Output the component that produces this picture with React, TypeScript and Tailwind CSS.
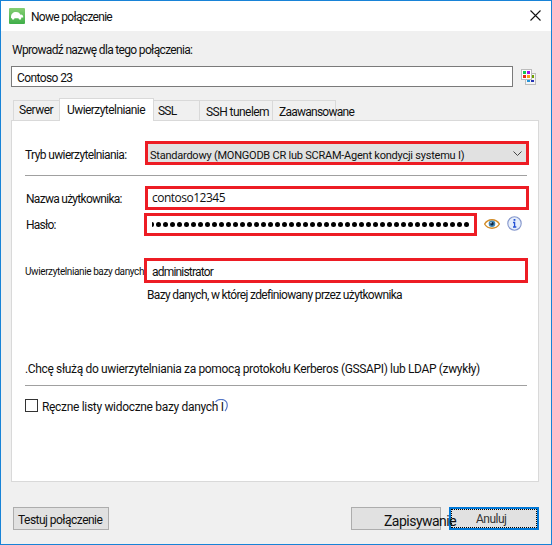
import React from "react";

function TurtleIcon() {
  return (
    <svg width="16" height="16" viewBox="0 0 16 16">
      <defs>
        <linearGradient id="turtle" x1="0" y1="0" x2="0" y2="1">
          <stop offset="0" stopColor="#86cf74" />
          <stop offset="1" stopColor="#3fae49" />
        </linearGradient>
      </defs>
      <rect width="16" height="16" rx="1" fill="url(#turtle)" />
      <path d="M2 9C2 6 4 4 7 4S10.5 5 11.2 6.8C12 6 14 6.8 14.2 8.5V9.6H12.3L12 11.5H10L9.5 10.2H5.5L5 11.5H3.2L3 10.2H2Z" fill="#fff" />
    </svg>
  );
}

function PaletteIcon() {
  return (
    <svg width="16" height="16" viewBox="0 0 16 16" shapeRendering="crispEdges">
      <rect x="4.5" y="4.5" width="10" height="11" fill="#f5f5f5" stroke="#bcbcbc" />
      <rect x="11" y="6" width="2" height="3" fill="#70a000" />
      <rect x="6" y="11" width="3" height="2" fill="#2794d8" />
      <rect x="10" y="11" width="3" height="2" fill="#2433b5" />
      <rect x=".5" y=".5" width="10" height="10" fill="#fff" stroke="#bcbcbc" />
      <rect x="2" y="2" width="3" height="3" fill="#16c653" />
      <rect x="6" y="2" width="3" height="3" fill="#a40ee8" />
      <rect x="2" y="6" width="3" height="3" fill="#e62b16" />
      <rect x="6" y="6" width="3" height="3" fill="#ff9e13" />
    </svg>
  );
}

function EyeIcon() {
  return (
    <svg width="16" height="12" viewBox="0 0 16 12">
      <path d="M.6 6C4 .4 12 .4 15.4 6C12 11.6 4 11.6 .6 6Z" fill="#fff" stroke="#d28b25" strokeWidth="1.4" />
      <circle cx="8" cy="5.8" r="3.3" fill="#3f86b5" />
      <circle cx="8" cy="5.8" r="1.7" fill="#10243c" />
      <circle cx="7" cy="4.7" r=".8" fill="#d8effc" />
    </svg>
  );
}

function InfoIcon() {
  return (
    <svg width="15" height="15" viewBox="0 0 15 15">
      <circle cx="7.5" cy="7.5" r="6.7" fill="#e7effc" stroke="#8597cc" strokeWidth="1.1" />
      <path d="M6 6.5H7.6V11M6 11H9.3" fill="none" stroke="#2452d6" strokeWidth="1.3" />
      <rect x="6.6" y="3" width="1.8" height="1.8" fill="#2452d6" />
    </svg>
  );
}

const dots = Array.from({ length: 45 }, (_, i) => i);

export default function App() {
  return (
    <div className="flex h-[545px] w-[552px] flex-col overflow-hidden border border-[#1883d7] bg-[#f0f0f0] font-['Roboto','Open_Sans',sans-serif] text-[12px] leading-[16px] whitespace-nowrap text-[#101010]">
      <header className="flex h-[30px] shrink-0 bg-white pt-[7px] pl-2">
        <TurtleIcon />
        <span className="ml-[6px] pt-px tracking-[-0.7px]">Nowe połączenie</span>
        <svg className="mt-[2px] mr-[10px] ml-auto" width="11" height="11" viewBox="0 0 11 11">
          <path d="M.5 .5L10.5 10.5M10.5 .5L.5 10.5" stroke="#111" strokeWidth="1.1" />
        </svg>
      </header>

      <div className="h-[35px] shrink-0 pt-[11px] pl-[11px] tracking-[-0.67px]">Wprowadź nazwę dla tego połączenia:</div>
      <div className="flex h-[21px] shrink-0 pl-[10px]">
        <div className="h-[21px] w-[502px] border border-[#7a7a7a] bg-white pt-[3px] pl-[5px] tracking-[-0.6px]">Contoso 23</div>
        <div className="ml-2 pt-[3px]"><PaletteIcon /></div>
      </div>

      <nav className="z-10 mt-[10px] ml-3 flex h-[24px] shrink-0 items-end">
        <div className="mb-px h-[20px] w-[46px] border-t border-l border-[#d9d9d9] pt-px pl-[5px] tracking-[-0.5px]">Serwer</div>
        <div className="h-[23px] w-[95px] border-x border-t border-[#d9d9d9] bg-white pt-[3px] pl-[7px] tracking-[-0.56px]">Uwierzytelnianie</div>
        <div className="mb-px h-[20px] w-[46px] border-t border-r border-[#d9d9d9] pt-[2px] pl-[4px] tracking-[-0.8px]">SSL</div>
        <div className="mb-px h-[20px] w-[73px] border-t border-r border-[#d9d9d9] pt-[3px] pl-[6px] tracking-[-0.55px]">SSH tunelem</div>
        <div className="mb-px h-[20px] w-[63px] border-t border-r border-[#d9d9d9] pt-[3px] pl-[6px] tracking-[-0.75px]">Zaawansowane</div>
      </nav>

      <main className="-mt-px ml-[10px] h-[362px] w-[528px] shrink-0 border border-[#d9d9d9] bg-white pl-[13px]">
        <section className="flex h-[55px] w-[502px] border-b border-[#a0a0a0] pt-5">
          <span className="w-[120px] shrink-0 pt-[6px] tracking-[-0.62px]">Tryb uwierzytelniania:</span>
          <div className="flex h-6 w-[384px] shrink-0 justify-between border-3 border-[#ed1c24] bg-[#e1e1e1] pt-[4px] pr-[4px] pl-[2px] text-[11px] leading-[15px] tracking-[-0.23px]">
            <span>Standardowy (MONGODB CR lub SCRAM-Agent kondycji systemu I)</span>
            <svg className="mt-[3px]" width="9" height="6" viewBox="0 0 9 6"><path d="M.5 .5L4.5 4.5L8.5 .5" fill="none" stroke="#444" /></svg>
          </div>
        </section>
        <section className="mt-[10px] flex h-6">
          <span className="w-[120px] shrink-0 pt-[5px] pl-px tracking-[-0.72px]">Nazwa użytkownika:</span>
          <div className="w-[384px] border-3 border-[#ed1c24] pt-px pl-1 font-['Open_Sans',sans-serif] text-[12px] tracking-[-0.5px]">contoso12345</div>
        </section>
        <section className="mt-[3px] flex h-[23px]">
          <span className="w-[119px] shrink-0 pt-[4px] pl-px tracking-[-0.75px]">Hasło:</span>
          <div className="flex w-[333px] items-center gap-[2px] overflow-hidden border-3 border-[#ed1c24] pl-[5px]">
            <i className="h-[5px] w-[2px] shrink-0 rounded-r-full bg-black" />
            {dots.map((i) => <i key={i} className="size-[5px] shrink-0 rounded-full bg-black" />)}
          </div>
          <div className="ml-[7px] pt-[5px]"><EyeIcon /></div>
          <div className="ml-[7px] pt-[3px]"><InfoIcon /></div>
        </section>
        <section className="mt-[22px] flex h-[25px]">
          <span className="w-[119px] shrink-0 pt-[6px] text-[10px] tracking-[-0.4px]">Uwierzytelnianie bazy danych:</span>
          <div className="w-[384px] border-3 border-[#ed1c24] pt-[3px] pl-[5px] tracking-[-0.8px]">administrator</div>
        </section>
        <div className="mt-1 pl-[122px] tracking-[-0.65px]">Bazy danych, w której zdefiniowany przez użytkownika</div>
        <div className="mt-[58px] h-[25px] w-[502px] border-b border-[#a0a0a0] tracking-[-0.35px]">.Chcę służą do uwierzytelniania za pomocą protokołu Kerberos (GSSAPI) lub LDAP (zwykły)</div>
        <div className="mt-[13px] flex">
          <div className="size-[13px] border border-[#333]" />
          <span className="ml-[4px] tracking-[-0.32px]">Ręczne listy widoczne bazy danych I</span>
          <svg className="-ml-[10px]" width="15" height="14" viewBox="0 0 15 14"><path d="M1.5 3C4 -.5 10 -.5 12.5 3C14 6 13 10 11 12" fill="none" stroke="#5578c8" strokeWidth="1.2" /></svg>
        </div>
      </main>

      <footer className="mt-[25px] ml-3 flex h-[23px] shrink-0">
        <button className="flex w-24 border border-[#adadad] bg-[#e1e1e1] pt-[4px] pl-1 leading-[16px] tracking-[-0.53px]">Testuj połączenie</button>
        <button className="z-10 ml-[242px] flex w-[90px] border border-[#adadad] bg-[#e1e1e1] pt-[4px] pl-8 text-[14px] leading-[18px] tracking-[-0.52px]">Zapisywanie</button>
        <button className="ml-2 w-[90px] border-2 border-[#0078d7] bg-[#e1e1e1]">
          <span className="flex h-[19px] border border-dotted border-black pt-px pl-6 leading-[16px] tracking-[-0.5px] text-[#333]">Anuluj</span>
        </button>
      </footer>
    </div>
  );
}
